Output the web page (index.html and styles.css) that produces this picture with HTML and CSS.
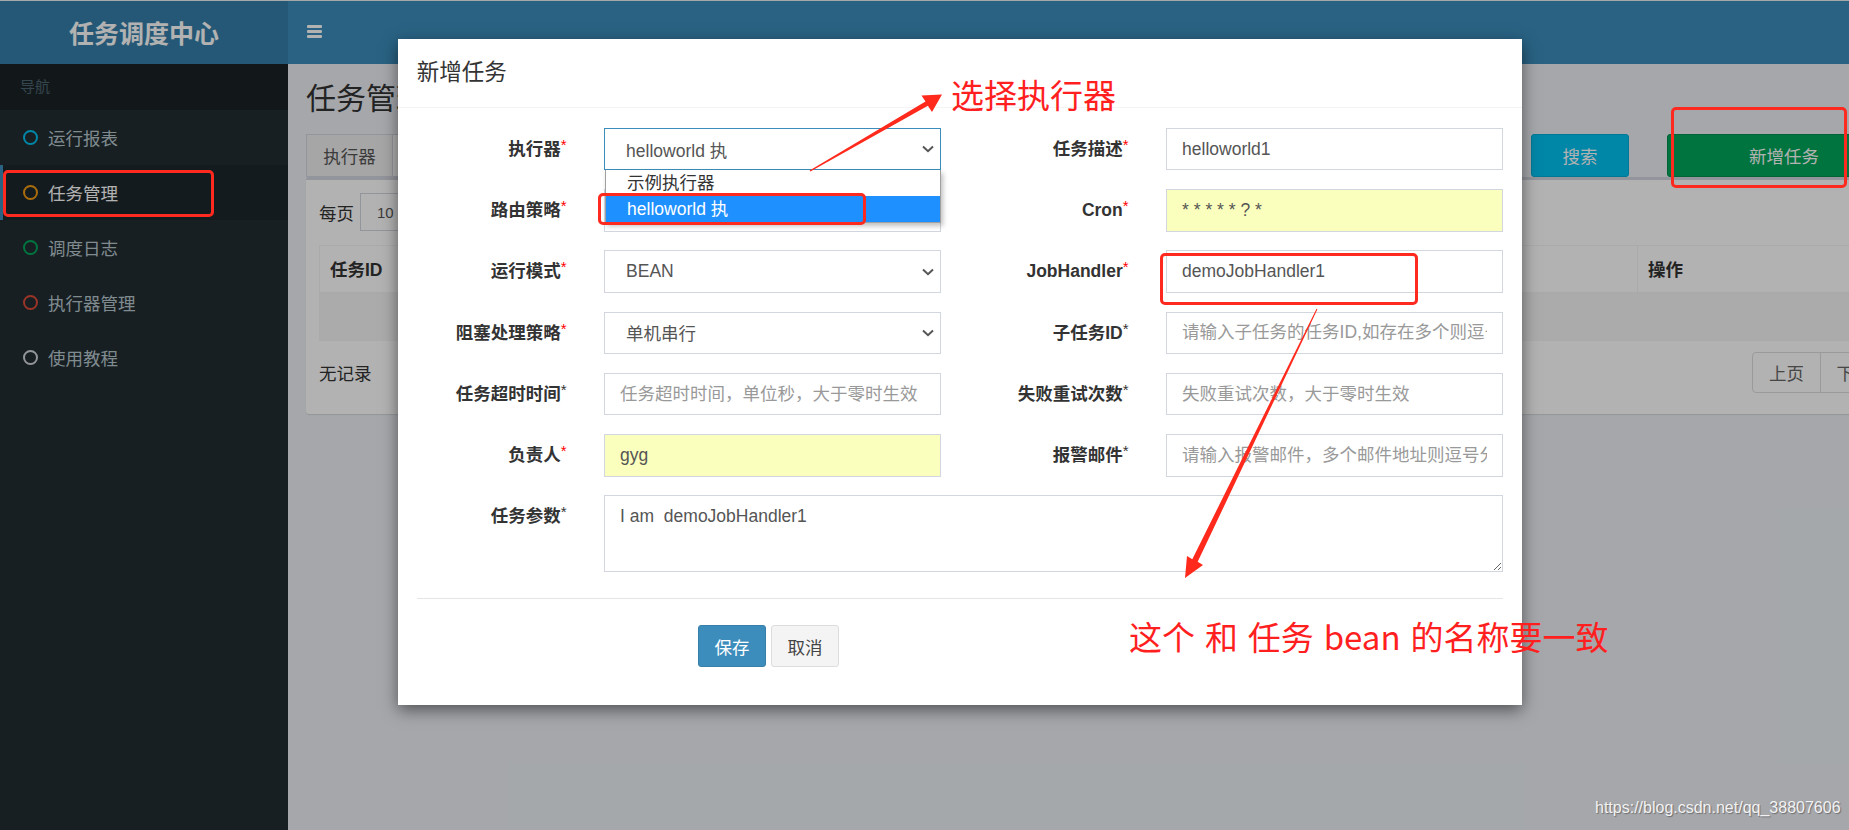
FILE: index.html
```html
<!DOCTYPE html>
<html lang="zh-CN">
<head>
<meta charset="utf-8">
<title>任务调度中心</title>
<link rel="stylesheet" href="styles.css">
</head>
<body>
<div class="app">
  <header class="main-header">
    <div class="logo">任务调度中心</div>
    <nav class="navbar"><span class="toggle"><i></i><i></i><i></i></span></nav>
  </header>
  <div class="layout">
    <aside class="sidebar">
      <div class="nav-header">导航</div>
      <ul class="menu">
        <li><span class="ring aqua"></span>运行报表</li>
        <li class="active"><span class="ring yellow"></span>任务管理</li>
        <li><span class="ring green"></span>调度日志</li>
        <li><span class="ring red"></span>执行器管理</li>
        <li><span class="ring gray"></span>使用教程</li>
      </ul>
    </aside>
    <main class="content">
      <h1 class="page-title">任务管理</h1>
      <div class="filters">
        <div class="input-group"><span class="addon">执行器</span><span class="group-select">全部</span></div>
        <div class="input-group"><span class="addon">JobHandler</span><span class="group-select"></span></div>
        <button class="btn btn-info">搜索</button>
        <button class="btn btn-success">新增任务</button>
      </div>
      <section class="box">
        <div class="length">每页 <span class="len-select">10</span> 条记录</div>
        <table class="table">
          <colgroup><col class="c1"><col class="c2"><col class="c3"><col class="c4"><col class="c5"><col class="c6"><col class="c7"></colgroup>
          <thead><tr><th>任务ID</th><th>任务描述</th><th>运行模式</th><th>Cron</th><th>负责人</th><th>状态</th><th>操作</th></tr></thead>
          <tbody><tr><td colspan="7"></td></tr></tbody>
        </table>
        <div class="box-foot">
          <span>无记录</span>
          <div class="pager"><span>上页</span><span>下页</span></div>
        </div>
      </section>
    </main>
  </div>
</div>

<div class="backdrop"></div>

<div class="modal">
  <div class="modal-header"><h4 class="modal-title">新增任务</h4></div>
  <div class="modal-body">
    <form class="form-grid">
      <label class="lbl">执行器<em class="req">*</em></label>
      <div class="ctl">
        <div class="select focus"><span>helloworld 执</span>
          <svg class="chev" viewBox="0 0 12 8"><path d="M1 1.5 L6 6.2 L11 1.5" fill="none" stroke="#555" stroke-width="2"/></svg>
          <div class="dropdown">
            <div class="opt">示例执行器</div>
            <div class="opt hl">helloworld 执</div>
          </div>
        </div>
      </div>
      <label class="lbl">任务描述<em class="req">*</em></label>
      <div class="ctl"><input class="input" value="helloworld1" readonly></div>

      <label class="lbl">路由策略<em class="req">*</em></label>
      <div class="ctl"><div class="select"><span></span>
        <svg class="chev" viewBox="0 0 12 8"><path d="M1 1.5 L6 6.2 L11 1.5" fill="none" stroke="#555" stroke-width="2"/></svg></div></div>
      <label class="lbl">Cron<em class="req">*</em></label>
      <div class="ctl"><input class="input autofill" value="* * * * * ? *" readonly></div>

      <label class="lbl">运行模式<em class="req">*</em></label>
      <div class="ctl"><div class="select"><span>BEAN</span>
        <svg class="chev" viewBox="0 0 12 8"><path d="M1 1.5 L6 6.2 L11 1.5" fill="none" stroke="#555" stroke-width="2"/></svg></div></div>
      <label class="lbl">JobHandler<em class="req">*</em></label>
      <div class="ctl"><input class="input" value="demoJobHandler1" readonly></div>

      <label class="lbl">阻塞处理策略<em class="req">*</em></label>
      <div class="ctl"><div class="select"><span>单机串行</span>
        <svg class="chev" viewBox="0 0 12 8"><path d="M1 1.5 L6 6.2 L11 1.5" fill="none" stroke="#555" stroke-width="2"/></svg></div></div>
      <label class="lbl">子任务ID<em class="star">*</em></label>
      <div class="ctl"><input class="input" placeholder="请输入子任务的任务ID,如存在多个则逗号分隔" readonly></div>

      <label class="lbl">任务超时时间<em class="star">*</em></label>
      <div class="ctl"><input class="input" placeholder="任务超时时间，单位秒，大于零时生效" readonly></div>
      <label class="lbl">失败重试次数<em class="star">*</em></label>
      <div class="ctl"><input class="input" placeholder="失败重试次数，大于零时生效" readonly></div>

      <label class="lbl">负责人<em class="req">*</em></label>
      <div class="ctl"><input class="input autofill" value="gyg" readonly></div>
      <label class="lbl">报警邮件<em class="star">*</em></label>
      <div class="ctl"><input class="input" placeholder="请输入报警邮件，多个邮件地址则逗号分隔" readonly></div>

      <label class="lbl">任务参数<em class="star">*</em></label>
      <div class="ctl wide"><textarea class="textarea" readonly>I am  demoJobHandler1</textarea></div>
    </form>
    <div class="form-footer">
      <button class="mbtn primary">保存</button>
      <button class="mbtn default">取消</button>
    </div>
  </div>
</div>

<svg class="arrows" viewBox="0 0 1849 830" width="1849" height="830">
  <polygon points="809.6,170.6 925.5,101.4 921.5,95.5 942,94.5 932,112 927.9,105.8 810.4,171.6" fill="#ff2a1c"/>
  <polygon points="1316.55,308.78 1192.3,559.2 1187,556 1185,578 1203,565 1197.7,561.8 1317.45,309.22" fill="#ff2a1c"/>
</svg>

<div class="mark mark-nav"></div>
<div class="mark mark-opt"></div>
<div class="mark mark-handler"></div>
<div class="mark mark-add"></div>

<div class="note note-exec">选择执行器</div>
<div class="note note-bean">这个 和 任务 bean 的名称要一致</div>

<div class="watermark">https://blog.csdn.net/qq_38807606</div>
</body>
</html>
```

FILE: styles.css
```css
* { box-sizing: border-box; }
html, body { margin: 0; padding: 0; }
body {
  width: 1849px;
  height: 830px;
  overflow: hidden;
  position: relative;
  font-family: "Liberation Sans", "Noto Sans CJK SC", sans-serif;
  font-size: 17.5px;
  color: #333;
  background: #ecf0f5;
}

.app { display: grid; grid-template-rows: 64px 1fr; height: 830px; }

/* header */
.main-header { display: flex; border-top: 1px solid #eef0f2; }
.logo {
  width: 288px;
  background: #367fa9;
  color: #fff;
  font-weight: bold;
  font-size: 25px;
  display: flex;
  align-items: center;
  justify-content: center;
  padding-bottom: 2px;
}
.navbar { flex: 1; background: #3c8dbc; display: flex; align-items: center; padding-left: 19px; padding-bottom: 2px; }
.toggle { display: flex; flex-direction: column; gap: 2.3px; width: 15px; }
.toggle i { display: block; height: 2.5px; background: #fff; border-radius: 1px; }

/* layout */
.layout { display: grid; grid-template-columns: 288px 1fr; min-height: 0; }

.sidebar { background: #222d32; }
.nav-header { background: #1a2226; color: #4b646f; font-size: 15px; height: 46px; line-height: 46px; padding-left: 20px; }
.menu { list-style: none; margin: 0; padding: 0; }
.menu li { height: 55px; display: flex; align-items: center; padding-left: 23px; color: #b8c7ce; font-size: 17.5px; }
.menu li.active { background: #1e282c; border-left: 3px solid #3c8dbc; padding-left: 20px; color: #fff; }
.ring { width: 15px; height: 15px; border: 2.5px solid; border-radius: 50%; margin-right: 10px; flex: none; }
.ring.aqua { border-color: #00c0ef; }
.ring.yellow { border-color: #f39c12; }
.ring.green { border-color: #00a65a; }
.ring.red { border-color: #dd4b39; }
.ring.gray { border-color: #d2d6de; }

/* content */
.content { overflow: hidden; padding: 18px 0 0 18px; min-width: 0; }
.page-title { margin: 0; font-size: 30px; font-weight: 400; line-height: 33px; color: #333; }
.filters { display: flex; width: 1595px; margin-top: 19px; height: 43px; }
.input-group { display: flex; width: 400px; margin-right: 20px; }
.addon {
  width: 87px; flex: none;
  background: #eee; border: 1px solid #d2d6de;
  display: flex; align-items: center; justify-content: center;
  color: #555;
}
.group-select { flex: 1; border: 1px solid #d2d6de; border-left: 0; background: #fff; padding-left: 15px; display: flex; align-items: center; color: #555; }
.btn {
  height: 43px; border-radius: 3px; color: #fff;
  font-family: inherit; font-size: 17.5px; padding: 0;
}
.btn-info { background: #00c0ef; border: 1px solid #00acd6; width: 98px; margin-left: auto; }
.btn-success { background: #00a65a; border: 1px solid #008d4c; width: 234px; margin-left: 38px; }

.box {
  width: 1595px;
  background: #fff;
  border-top: 3px solid #d2d6de;
  border-radius: 3px;
  box-shadow: 0 1px 1px rgba(0,0,0,.1);
  padding: 13px 13px 21px 13px;
}
.length { display: flex; align-items: center; gap: 6px; height: 38px; }
.len-select {
  width: 80px; height: 38px; border: 1px solid #d2d6de;
  display: flex; align-items: center; padding-left: 16px; font-size: 15px; color: #555;
}
.table { width: 100%; border-collapse: collapse; table-layout: fixed; margin-top: 14px; border: 1px solid #f4f4f4; }
.c1 { width: 160px; } .c2 { width: 260px; } .c3 { width: 200px; } .c4 { width: 260px; }
.c5 { width: 220px; } .c6 { width: 218px; } .c7 { width: auto; }
.table th { height: 47px; text-align: left; padding: 0 10px; font-weight: bold; border: 1px solid #f4f4f4; border-bottom-width: 2px; }
.table td { height: 48px; background: #f5f5f5; }
.box-foot { display: flex; justify-content: space-between; align-items: center; margin-top: 11px; }
.pager { display: flex; height: 41px; border: 1px solid #ddd; border-radius: 4px; }
.pager span { width: 67px; display: flex; align-items: center; justify-content: center; color: #666; }
.pager span + span { border-left: 1px solid #ddd; }

/* backdrop */
.backdrop { position: absolute; inset: 0; background: rgba(0,0,0,.3); z-index: 5; }

/* modal */
.modal {
  position: absolute; left: 398px; top: 39px; width: 1124px;
  background: #fff; box-shadow: 0 5px 15px rgba(0,0,0,.5); z-index: 10;
}
.modal-header { height: 69px; padding: 0 18.75px; display: flex; align-items: center; border-bottom: 1px solid #f4f4f4; }
.modal-title { margin: 0; font-size: 22.5px; font-weight: 400; color: #333; line-height: 1; }
.modal-body { padding: 19.75px 18.75px 18.75px; }

.form-grid {
  display: grid;
  grid-template-columns: 187.33px 374.67px 187.33px 374.67px;
  grid-template-rows: repeat(6, 42.5px) 77px;
  row-gap: 18.75px;
  margin: 0 -18.75px;
}
.lbl {
  padding: 0 18.75px; text-align: right; font-weight: bold;
  line-height: 42.5px; font-size: 17.5px; color: #333; white-space: nowrap;
}
.lbl em { font-style: normal; font-weight: normal; font-size: 15px; vertical-align: top; line-height: 34px; }
.lbl .req { color: #f00; }
.lbl .star { color: #333; }
.ctl { padding: 0 18.75px; min-width: 0; }
.ctl.wide { grid-column: 2 / 5; }
.input, .select, .textarea {
  display: block; width: 100%; height: 42.5px;
  border: 1px solid #d2d6de; background: #fff;
  font-family: "Liberation Sans", "Noto Sans CJK SC", sans-serif; font-size: 17.5px; color: #555;
  outline: none; border-radius: 0;
}
.input { padding: 0 15px; }
.input::placeholder { color: #999; }
.autofill { background: #faffbd; }
.select { position: relative; display: flex; align-items: center; padding-left: 21px; }
.select.focus { border-color: #3c8dbc; }
.chev { position: absolute; right: 6px; top: 50%; margin-top: -4px; width: 12px; height: 8px; }
.textarea { height: 77px; padding: 8px 15px; resize: vertical; line-height: 1.4; }

.dropdown {
  position: absolute; left: 0; right: -1px; top: calc(100% + 1px);
  background: #fff; border: 1px solid #a0a0a0; border-top: 0;
  box-shadow: 2px 3px 5px rgba(0,0,0,.25); z-index: 3;
}
.opt { height: 26px; line-height: 27px; padding-left: 21px; font-size: 17.5px; color: #333; }
.opt.hl { background: #1e90ff; color: #fff; }

.form-footer { margin-top: 26px; border-top: 1px solid #e5e5e5; padding: 26px 0 18.75px 281.25px; display: flex; gap: 5px; }
.mbtn { height: 42px; padding: 0 15px; font-family: inherit; font-size: 17.5px; border-radius: 3px; }
.mbtn.primary { background: #3c8dbc; border: 1px solid #367fa9; color: #fff; width: 68px; }
.mbtn.default { background: #f4f4f4; border: 1px solid #ddd; color: #444; width: 68px; }

/* annotations */
.arrows { position: absolute; left: 0; top: 0; z-index: 30; pointer-events: none; }
.mark { position: absolute; border: 3px solid #ff2a1f; border-radius: 5px; z-index: 25; }
.mark-nav { left: 3px; top: 170px; width: 211px; height: 47px; }
.mark-opt { left: 598px; top: 193px; width: 268px; height: 32px; }
.mark-handler { left: 1160px; top: 253px; width: 258px; height: 52px; }
.mark-add { left: 1671px; top: 107px; width: 176px; height: 81px; }

.note {
  position: absolute; z-index: 30; color: #ff1f1f; font-size: 33px; line-height: 1;
  font-family: "Noto Sans CJK SC", "Liberation Sans", sans-serif; white-space: pre;
}
.note-exec { left: 951px; top: 78px; }
.note-bean { left: 1129px; top: 620px; word-spacing: 2.5px; }

.watermark {
  position: absolute; z-index: 30; left: 1595px; top: 800px;
  font-size: 16px; line-height: 16px; color: #f2f2f2;
  text-shadow: 1px 1px 1px rgba(0,0,0,.35);
}
```
